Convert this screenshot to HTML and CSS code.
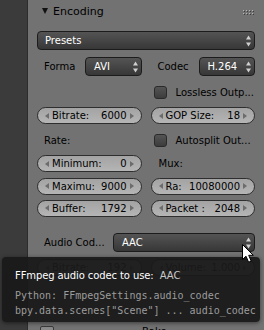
FILE: index.html
```html
<!DOCTYPE html>
<html>
<head>
<meta charset="utf-8">
<link rel="stylesheet" href="styles.css">
</head>
<body>
<div class="screen">
  <div class="strip"></div>
  <div class="panel">
    <div class="hdr">
      <span class="tri"></span>
      <span class="title">Encoding</span>
      <svg class="grip" width="11" height="5" viewBox="0 0 11 5">
        <g fill="#3e3e3e">
          <rect x="1" y="1" width="1" height="1"/><rect x="4" y="1" width="1" height="1"/><rect x="7" y="1" width="1" height="1"/><rect x="10" y="1" width="1" height="1"/>
          <rect x="1" y="4" width="1" height="1"/><rect x="4" y="4" width="1" height="1"/><rect x="7" y="4" width="1" height="1"/><rect x="10" y="4" width="1" height="1"/>
        </g>
        <g fill="#b4b4b4">
          <rect x="0" y="0" width="1" height="1"/><rect x="3" y="0" width="1" height="1"/><rect x="6" y="0" width="1" height="1"/><rect x="9" y="0" width="1" height="1"/>
          <rect x="0" y="3" width="1" height="1"/><rect x="3" y="3" width="1" height="1"/><rect x="6" y="3" width="1" height="1"/><rect x="9" y="3" width="1" height="1"/>
        </g>
      </svg>
    </div>

    <div class="menu presets">
      <span>Presets</span>
      <svg class="ud" width="5" height="12" viewBox="0 0 5 12"><path d="M2.5 0.5 L5 4.5 L0 4.5 Z M0 7.5 L5 7.5 L2.5 11.5 Z" fill="#cfcfcf"/></svg>
    </div>

    <div class="pair forma">
      <div class="cell">
        <span class="lbl fl">Forma</span>
        <div class="menu grow">
          <span>AVI</span>
          <svg class="ud" width="5" height="12" viewBox="0 0 5 12"><path d="M2.5 0.5 L5 4.5 L0 4.5 Z M0 7.5 L5 7.5 L2.5 11.5 Z" fill="#cfcfcf"/></svg>
        </div>
      </div>
      <div class="cell">
        <span class="lbl fl">Codec</span>
        <div class="menu grow">
          <span>H.264</span>
          <svg class="ud" width="5" height="12" viewBox="0 0 5 12"><path d="M2.5 0.5 L5 4.5 L0 4.5 Z M0 7.5 L5 7.5 L2.5 11.5 Z" fill="#cfcfcf"/></svg>
        </div>
      </div>
    </div>

    <div class="grid">
      <div></div>
      <div class="check"><span class="box"></span><span>Lossless Outp...</span></div>

      <div class="num">
        <svg class="arr" width="4" height="6" viewBox="0 0 4 6"><path d="M4 0 L0 3 L4 6 Z" fill="#6c6c6c"/></svg>
        <span class="k">Bitrate:</span><span class="v">6000</span>
        <svg class="arr" width="4" height="6" viewBox="0 0 4 6"><path d="M0 0 L4 3 L0 6 Z" fill="#6c6c6c"/></svg>
      </div>
      <div class="num">
        <svg class="arr" width="4" height="6" viewBox="0 0 4 6"><path d="M4 0 L0 3 L4 6 Z" fill="#6c6c6c"/></svg>
        <span class="k">GOP Size:</span><span class="v">18</span>
        <svg class="arr" width="4" height="6" viewBox="0 0 4 6"><path d="M0 0 L4 3 L0 6 Z" fill="#6c6c6c"/></svg>
      </div>

      <span class="lbl">Rate:</span>
      <div class="check"><span class="box"></span><span>Autosplit Out...</span></div>

      <div class="num">
        <svg class="arr" width="4" height="6" viewBox="0 0 4 6"><path d="M4 0 L0 3 L4 6 Z" fill="#6c6c6c"/></svg>
        <span class="k">Minimum:</span><span class="v">0</span>
        <svg class="arr" width="4" height="6" viewBox="0 0 4 6"><path d="M0 0 L4 3 L0 6 Z" fill="#6c6c6c"/></svg>
      </div>
      <span class="lbl mux">Mux:</span>

      <div class="num">
        <svg class="arr" width="4" height="6" viewBox="0 0 4 6"><path d="M4 0 L0 3 L4 6 Z" fill="#6c6c6c"/></svg>
        <span class="k">Maximu:</span><span class="v">9000</span>
        <svg class="arr" width="4" height="6" viewBox="0 0 4 6"><path d="M0 0 L4 3 L0 6 Z" fill="#6c6c6c"/></svg>
      </div>
      <div class="num">
        <svg class="arr" width="4" height="6" viewBox="0 0 4 6"><path d="M4 0 L0 3 L4 6 Z" fill="#6c6c6c"/></svg>
        <span class="k">Ra:</span><span class="v">10080000</span>
        <svg class="arr" width="4" height="6" viewBox="0 0 4 6"><path d="M0 0 L4 3 L0 6 Z" fill="#6c6c6c"/></svg>
      </div>

      <div class="num">
        <svg class="arr" width="4" height="6" viewBox="0 0 4 6"><path d="M4 0 L0 3 L4 6 Z" fill="#6c6c6c"/></svg>
        <span class="k">Buffer:</span><span class="v">1792</span>
        <svg class="arr" width="4" height="6" viewBox="0 0 4 6"><path d="M0 0 L4 3 L0 6 Z" fill="#6c6c6c"/></svg>
      </div>
      <div class="num">
        <svg class="arr" width="4" height="6" viewBox="0 0 4 6"><path d="M4 0 L0 3 L4 6 Z" fill="#6c6c6c"/></svg>
        <span class="k">Packet :</span><span class="v">2048</span>
        <svg class="arr" width="4" height="6" viewBox="0 0 4 6"><path d="M0 0 L4 3 L0 6 Z" fill="#6c6c6c"/></svg>
      </div>
    </div>

    <div class="audio">
      <span class="lbl al">Audio Cod...</span>
      <div class="menu grow">
        <span>AAC</span>
        <svg class="ud" width="5" height="12" viewBox="0 0 5 12"><path d="M2.5 0.5 L5 4.5 L0 4.5 Z M0 7.5 L5 7.5 L2.5 11.5 Z" fill="#cfcfcf"/></svg>
      </div>
    </div>

    <div class="pair ghost">
      <div class="num">
        <svg class="arr" width="4" height="6" viewBox="0 0 4 6"><path d="M4 0 L0 3 L4 6 Z" fill="#6c6c6c"/></svg>
        <span class="k">Bitrate:</span><span class="v">192</span>
        <svg class="arr" width="4" height="6" viewBox="0 0 4 6"><path d="M0 0 L4 3 L0 6 Z" fill="#6c6c6c"/></svg>
      </div>
      <div class="num">
        <svg class="arr" width="4" height="6" viewBox="0 0 4 6"><path d="M4 0 L0 3 L4 6 Z" fill="#6c6c6c"/></svg>
        <span class="k">Volume:</span><span class="v">1.000</span>
        <svg class="arr" width="4" height="6" viewBox="0 0 4 6"><path d="M0 0 L4 3 L0 6 Z" fill="#6c6c6c"/></svg>
      </div>
    </div>

    <div class="bake">
      <span class="ico"></span>
      <span class="bk">Bake</span>
    </div>
  </div>

  <div class="tooltip">
    <div class="tt1">FFmpeg audio codec to use:<span class="val">AAC</span></div>
    <div class="tt2">Python: FFmpegSettings.audio_codec</div>
    <div class="tt2">bpy.data.scenes["Scene"] ... audio_codec</div>
  </div>

  <svg class="cursor" width="13" height="20" viewBox="0 0 13 20">
    <path d="M0.5 0.5 L0.5 15.5 L4 12.2 L6.6 18.2 L9.2 17.1 L6.7 11.3 L11.3 11.3 Z" fill="#ffffff" stroke="#000000" stroke-width="1" stroke-linejoin="miter"/>
  </svg>
</div>
</body>
</html>
```

FILE: styles.css
```css
html, body {
  margin: 0;
  padding: 0;
  background: #3b3b3b;
}

.screen {
  position: relative;
  width: 264px;
  height: 330px;
  overflow: hidden;
  display: flex;
  font-family: "DejaVu Sans", sans-serif;
  font-size: 10px;
  color: #000;
}

.strip {
  flex: none;
  width: 27px;
  background: #3b3b3b;
  border-right: 1px solid #2c2c2c;
}

.panel {
  flex: 1;
  background: #727272;
  padding: 0 9px;
  display: flex;
  flex-direction: column;
  min-width: 0;
}

.hdr {
  flex: none;
  height: 22px;
  display: flex;
  align-items: center;
  padding-left: 5px;
}

.tri {
  width: 0;
  height: 0;
  border-left: 3.5px solid transparent;
  border-right: 3.5px solid transparent;
  border-top: 6px solid #111;
  margin-right: 5px;
}

.title {
  font-size: 11px;
  color: #000;
}

.grip {
  margin-left: auto;
  margin-right: 1px;
  margin-top: 3px;
}

.menu {
  height: 19px;
  box-sizing: border-box;
  border: 1px solid #1c1c1c;
  border-radius: 4px;
  background: linear-gradient(#545454, #373737);
  color: #fff;
  display: flex;
  align-items: center;
  padding: 0 3px 0 7px;
  white-space: nowrap;
}

.ud {
  margin-left: auto;
  flex: none;
}

.presets {
  flex: none;
  margin-top: 9px;
}

.pair {
  display: grid;
  grid-template-columns: 1fr 1fr;
  column-gap: 9px;
}

.forma {
  flex: none;
  margin-top: 7px;
  height: 19px;
}

.cell {
  display: flex;
  align-items: center;
  min-width: 0;
}

.lbl {
  color: #000;
  padding-left: 7px;
  white-space: nowrap;
}

.fl {
  flex: none;
  width: 48px;
  box-sizing: border-box;
}

.cell .lbl.fl + .menu {
  padding-left: 8px;
}

.grow {
  flex: 1;
  min-width: 0;
}

.grid {
  flex: none;
  display: grid;
  grid-template-columns: 1fr 1fr;
  column-gap: 9px;
  grid-template-rows: 22px 25px 24px 23px 22px 22px;
  margin-top: 5px;
  align-items: center;
}

.mux {
  padding-left: 8px;
}

.num {
  height: 17px;
  box-sizing: border-box;
  border: 1px solid #2e2e2e;
  border-radius: 9px;
  background: linear-gradient(#a3a3a3, #b5b5b5);
  display: flex;
  align-items: center;
  padding: 0 7px;
  color: #000;
  white-space: nowrap;
  min-width: 0;
}

.arr {
  flex: none;
}

.num .k {
  margin-left: 3px;
}

.num .v {
  margin-left: auto;
  margin-right: 3px;
}

.check {
  display: flex;
  align-items: center;
  padding-left: 3px;
  white-space: nowrap;
}

.box {
  flex: none;
  width: 13px;
  height: 13px;
  box-sizing: border-box;
  border: 1px solid #2a2a2a;
  border-radius: 3px;
  background: linear-gradient(#545454, #3c3c3c);
  margin-right: 9px;
}

.audio {
  flex: none;
  display: flex;
  align-items: center;
  height: 19px;
  margin-top: 14px;
}

.al {
  flex: none;
  width: 76px;
  box-sizing: border-box;
}

.audio .menu {
  padding-left: 8px;
}

.ghost {
  flex: none;
  height: 17px;
  margin-top: 7px;
}

.bake {
  flex: none;
  margin-top: 48px;
  height: 20px;
  display: flex;
  align-items: flex-start;
  padding-top: 2px;
  box-sizing: border-box;
}

.ico {
  width: 14px;
  height: 12px;
  box-sizing: border-box;
  border: 1px solid #3a3a3a;
  border-radius: 2px;
  margin-left: 3px;
  background: #8a8a8a;
}

.bk {
  margin-left: 88px;
  color: #000;
}

.tooltip {
  position: absolute;
  left: 2px;
  top: 257px;
  width: 258px;
  height: 65px;
  box-sizing: border-box;
  padding: 11px 0 0 13px;
  background: rgba(25, 25, 25, 0.95);
  border-radius: 4px;
  box-shadow: 0 1px 4px rgba(0, 0, 0, 0.5);
  white-space: nowrap;
}

.tt1 {
  color: #ffffff;
  font-size: 10px;
  line-height: 15px;
  letter-spacing: -0.1px;
  margin-bottom: 5px;
}

.tt1 .val {
  color: #cacaca;
  margin-left: 6px;
  letter-spacing: 0;
}

.tt2 {
  font-family: "DejaVu Sans Mono", monospace;
  font-size: 10px;
  line-height: 15px;
  color: #9c9c9c;
  white-space: pre;
}

.cursor {
  position: absolute;
  left: 242px;
  top: 244px;
}
```
